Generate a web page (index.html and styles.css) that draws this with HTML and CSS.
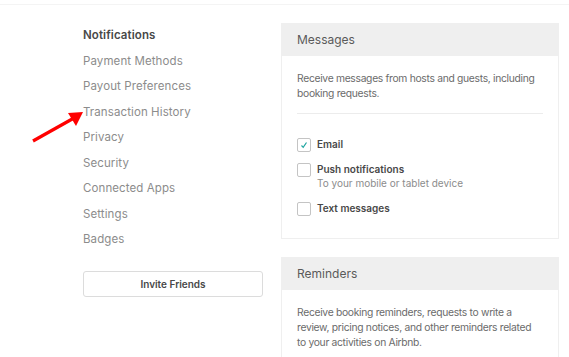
FILE: index.html
```html
<!DOCTYPE html>
<html lang="en">
<head>
    <meta charset="UTF-8">
    <meta name="viewport" content="width=device-width, initial-scale=1.0">
    <title>Notifications</title>
    <link rel="stylesheet" href="styles.css">
</head>
<body>
    <div class="topline"></div>
    <div class="page">
        <div class="sidebar">
            <ul class="side-nav">
                <li class="active">Notifications</li>
                <li>Payment Methods</li>
                <li>Payout Preferences</li>
                <li>Transaction History</li>
                <li>Privacy</li>
                <li>Security</li>
                <li>Connected Apps</li>
                <li>Settings</li>
                <li>Badges</li>
            </ul>
            <button type="button" class="invite-btn">Invite Friends</button>

            <svg class="arrow" width="60" height="40" viewBox="0 0 60 40">
                <line x1="3" y1="31" x2="44" y2="8" stroke="#ff0000" stroke-width="3.2"/>
                <polygon points="53,2 38,3 46,16" fill="#ff0000"/>
            </svg>
        </div>

        <div class="main">
            <div class="panel">
                <div class="panel-head">Messages</div>
                <div class="panel-body">
                    <p class="desc">Receive messages from hosts and guests, including booking requests.</p>
                    <div class="divider"></div>
                    <label class="option">
                        <span class="box">
                            <svg width="8" height="8" viewBox="0 0 8 8"><path d="M1.5 4.5 L3.2 6.3 L6.5 1.5" fill="none" stroke="#1fa5a0" stroke-width="1.2"/></svg>
                        </span>
                        <span class="option-text"><b>Email</b></span>
                    </label>
                    <label class="option">
                        <span class="box"></span>
                        <span class="option-text"><b>Push notifications</b><small>To your mobile or tablet device</small></span>
                    </label>
                    <label class="option">
                        <span class="box"></span>
                        <span class="option-text"><b>Text messages</b></span>
                    </label>
                </div>
            </div>

            <div class="panel">
                <div class="panel-head">Reminders</div>
                <div class="panel-body">
                    <p class="desc narrow">Receive booking reminders, requests to write a review, pricing notices, and other reminders related to your activities on Airbnb.</p>
                </div>
            </div>
        </div>
    </div>
</body>
</html>
```

FILE: styles.css
```css
body {
    font-family: Inter, "Open Sans", sans-serif;
    margin: 0;
    padding: 0;
    background-color: #ffffff;
    color: #484848;
    overflow: hidden;
}

.topline {
    height: 1px;
    margin-top: 4px;
    background-color: #f4f4f4;
}

.page {
    display: flex;
    padding-left: 83px;
    padding-top: 18px;
}

.sidebar {
    position: relative;
    width: 180px;
    margin-right: 18px;
}

.side-nav {
    list-style: none;
    margin: 0;
    padding: 0;
}

.side-nav li {
    font-size: 11.5px;
    line-height: 25.5px;
    color: #8c8c8c;
    letter-spacing: 0.1px;
}

.side-nav li.active {
    color: #484848;
    font-weight: 600;
}

.invite-btn {
    display: block;
    width: 180px;
    height: 26px;
    margin-top: 18px;
    background: #fff;
    border: 1px solid #dcdcdc;
    border-radius: 3px;
    font-family: inherit;
    font-size: 10px;
    font-weight: 600;
    color: #484848;
}

.arrow {
    position: absolute;
    left: -53px;
    top: 87px;
}

.main {
    width: 278px;
}

.panel {
    border: 1px solid #efefef;
    margin-bottom: 18px;
}

.panel-head {
    background-color: #efefef;
    height: 32px;
    line-height: 32px;
    padding-left: 15px;
    font-size: 12px;
    color: #5a5a5a;
}

.panel-body {
    padding: 15px 15px 11px;
}

.desc {
    margin: 0;
    font-size: 10.3px;
    line-height: 15px;
    letter-spacing: -0.3px;
    color: #6b6b6b;
}

.desc.narrow {
    max-width: 236px;
}

.divider {
    height: 1px;
    background-color: #ececec;
    margin: 12px 0 24px;
}

.option {
    display: flex;
    align-items: flex-start;
    margin-bottom: 11px;
}

.box {
    display: flex;
    align-items: center;
    justify-content: center;
    width: 12px;
    height: 12px;
    border: 1px solid #c4c4c4;
    border-radius: 2px;
    margin-right: 6px;
    flex-shrink: 0;
}

.option-text b {
    display: block;
    font-size: 10px;
    font-weight: 600;
    line-height: 13px;
    color: #484848;
}

.option-text small {
    display: block;
    font-size: 10px;
    line-height: 15px;
    color: #8c8c8c;
}
```
